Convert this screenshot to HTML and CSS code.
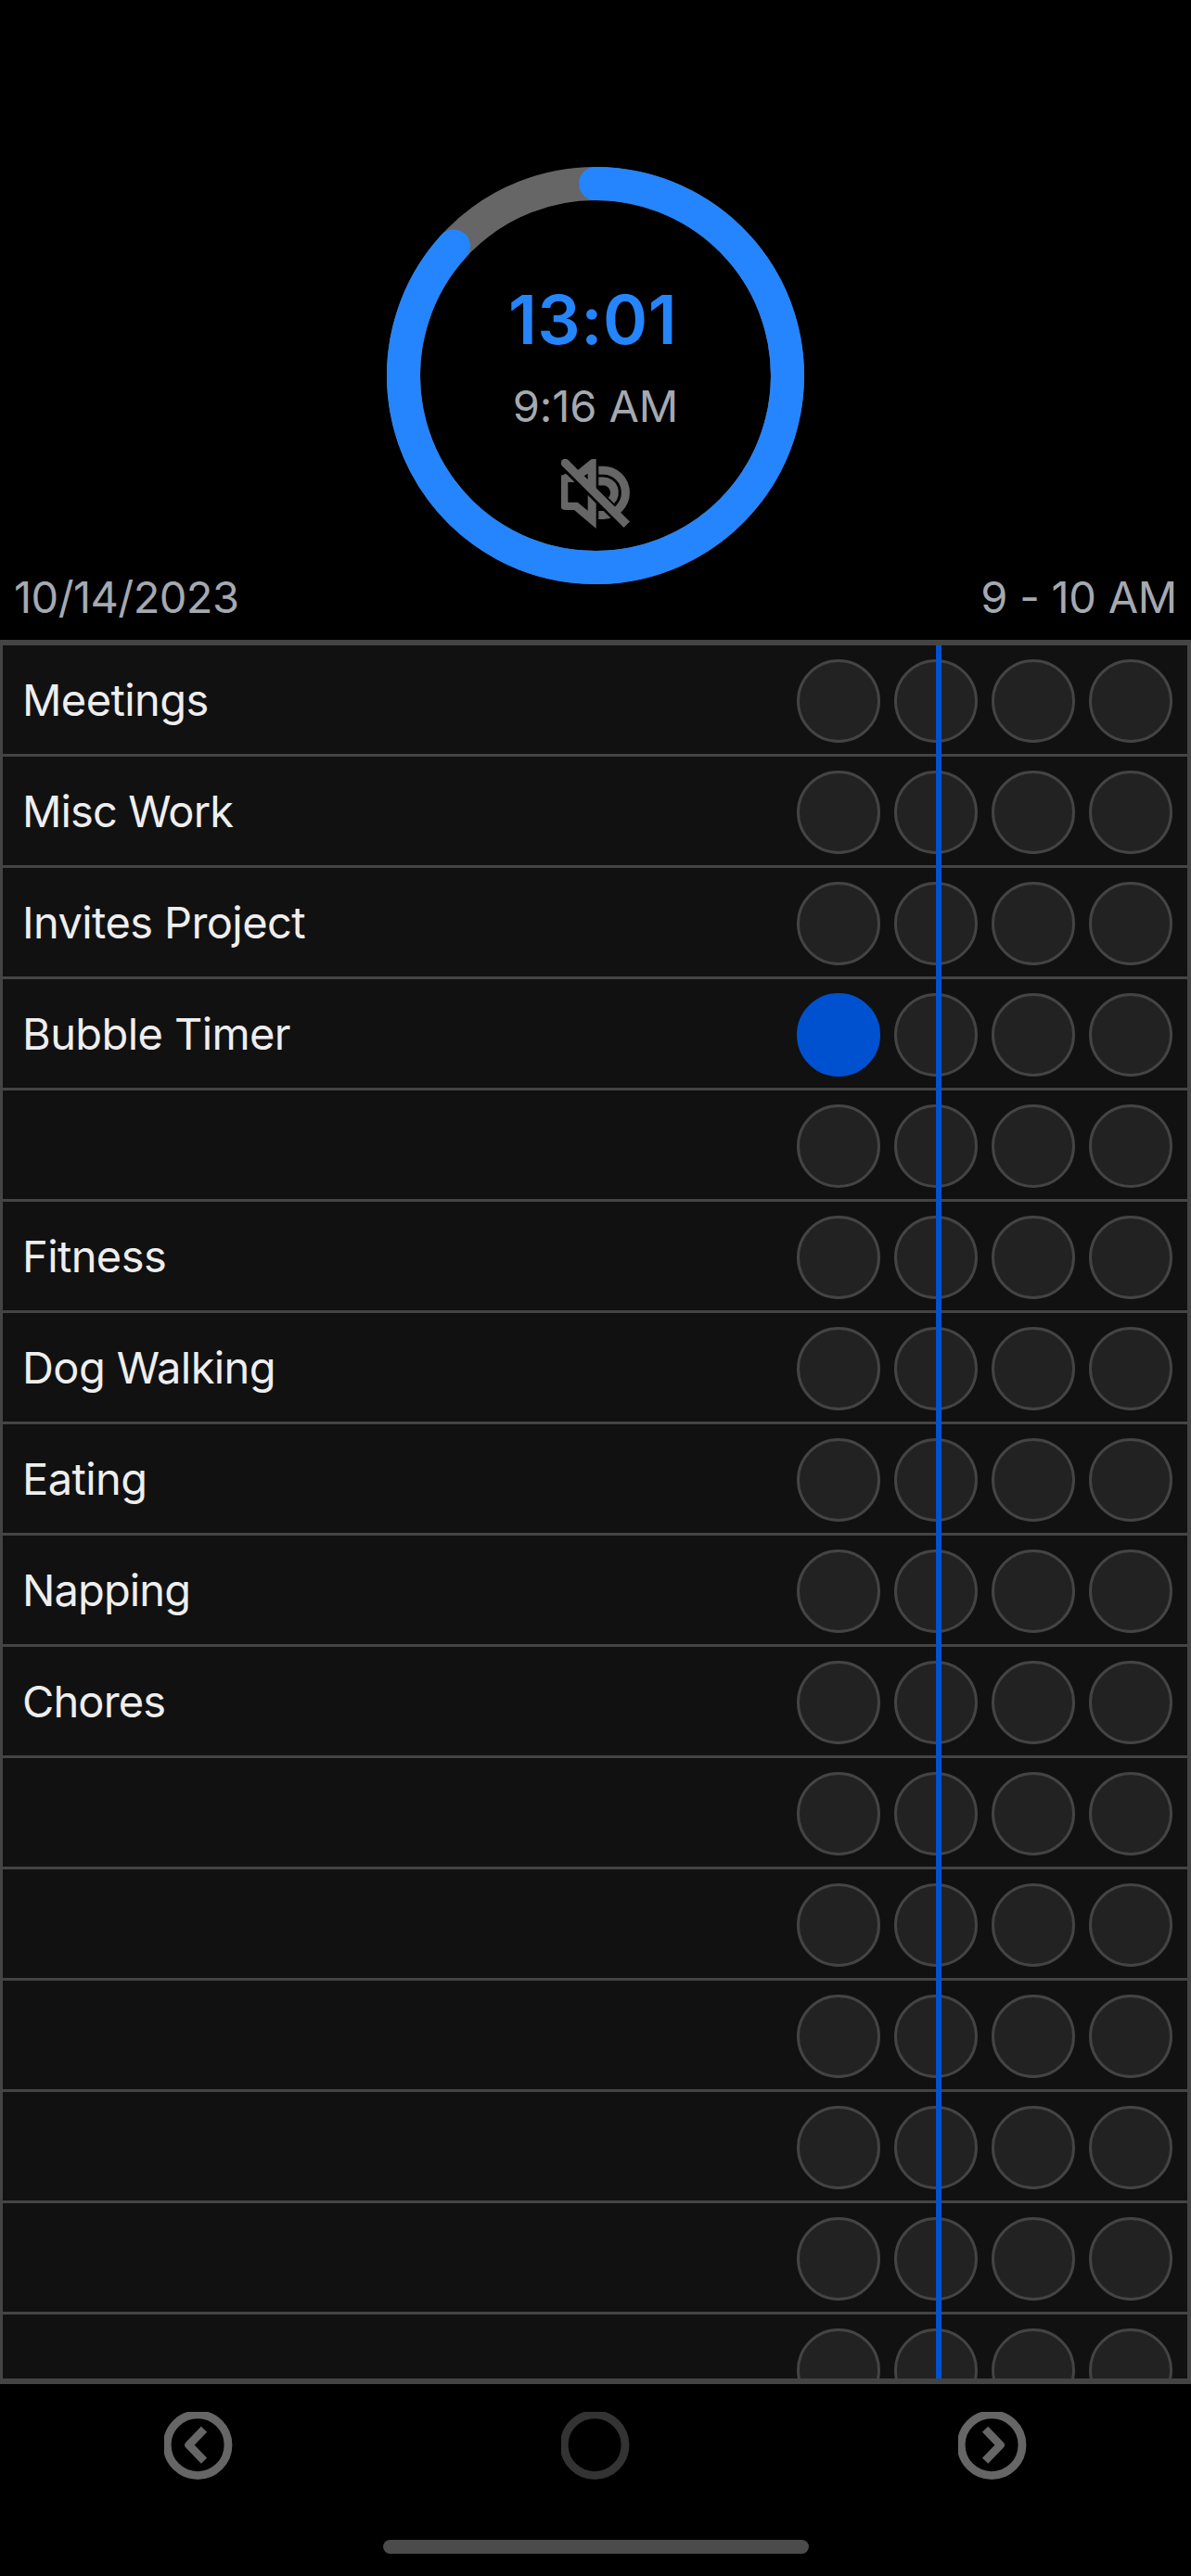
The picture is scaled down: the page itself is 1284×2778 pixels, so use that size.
FILE: index.html
```html
<!DOCTYPE html>
<html lang="en">
<head>
<meta charset="utf-8">
<title>Bubble Timer</title>
<link rel="stylesheet" href="styles.css">
</head>
<body>
<main class="app">
  <header class="header">
    <div class="dial">
      <svg class="ring" viewBox="0 0 450 450" aria-hidden="true">
        <circle class="ring-track" cx="225" cy="225" r="207"/>
        <path class="ring-value" d="M225 18A207 207 0 1 1 72.1 85.4"/>
      </svg>
      <div class="dial-content">
        <div class="countdown">13:01</div>
        <div class="clock">9:16 AM</div>
        <svg class="mute" viewBox="0 0 74 75" aria-label="Muted">
          <path class="mute-fill" d="M0 19Q.3 16.7 3.3 16.7L4.3 15.7 6.3 16.7 15 25.3 14.5 25H7.3V46.7H17.7L28.7 55.7V37.5L37.7 46.5V75L14 55H5Q0 55 0 52Z"/>
          <path class="mute-fill" fill-rule="evenodd" d="M17.7 12.3L32 .6Q33 0 34 0H37.7V36H30L17 14ZM28.7 15.7L24.3 18.5 28.7 22Z"/>
          <path class="mute-arc" d="M40.3 12.2H45.3A24.1 24.1 0 0 1 45.3 60.4H40.3"/>
          <path class="mute-arc" d="M40.3 24H45.3A12.2 12.2 0 0 1 53.9 44.8"/>
          <path class="mute-gap" d="M4.3 12.4L62.5 70.6"/>
          <path class="mute-slash" d="M4.3 4.3L70.8 70.8"/>
          <circle class="mute-fill" cx="4.3" cy="4.3" r="4.6"/>
        </svg>
      </div>
    </div>
    <div class="labels">
      <span class="date">10/14/2023</span>
      <span class="hours">9 - 10 AM</span>
    </div>
  </header>

  <section class="sheet">
    <div class="row"><span class="name">Meetings</span><i class="bubble"></i><i class="bubble"></i><i class="bubble"></i><i class="bubble"></i></div>
    <div class="row"><span class="name tight">Misc Work</span><i class="bubble"></i><i class="bubble"></i><i class="bubble"></i><i class="bubble"></i></div>
    <div class="row"><span class="name">Invites Project</span><i class="bubble"></i><i class="bubble"></i><i class="bubble"></i><i class="bubble"></i></div>
    <div class="row"><span class="name">Bubble Timer</span><i class="bubble filled"></i><i class="bubble"></i><i class="bubble"></i><i class="bubble"></i></div>
    <div class="row"><span class="name"></span><i class="bubble"></i><i class="bubble"></i><i class="bubble"></i><i class="bubble"></i></div>
    <div class="row"><span class="name">Fitness</span><i class="bubble"></i><i class="bubble"></i><i class="bubble"></i><i class="bubble"></i></div>
    <div class="row"><span class="name">Dog Walking</span><i class="bubble"></i><i class="bubble"></i><i class="bubble"></i><i class="bubble"></i></div>
    <div class="row"><span class="name">Eating</span><i class="bubble"></i><i class="bubble"></i><i class="bubble"></i><i class="bubble"></i></div>
    <div class="row"><span class="name tight">Napping</span><i class="bubble"></i><i class="bubble"></i><i class="bubble"></i><i class="bubble"></i></div>
    <div class="row"><span class="name tight">Chores</span><i class="bubble"></i><i class="bubble"></i><i class="bubble"></i><i class="bubble"></i></div>
    <div class="row"><span class="name"></span><i class="bubble"></i><i class="bubble"></i><i class="bubble"></i><i class="bubble"></i></div>
    <div class="row"><span class="name"></span><i class="bubble"></i><i class="bubble"></i><i class="bubble"></i><i class="bubble"></i></div>
    <div class="row"><span class="name"></span><i class="bubble"></i><i class="bubble"></i><i class="bubble"></i><i class="bubble"></i></div>
    <div class="row"><span class="name"></span><i class="bubble"></i><i class="bubble"></i><i class="bubble"></i><i class="bubble"></i></div>
    <div class="row"><span class="name"></span><i class="bubble"></i><i class="bubble"></i><i class="bubble"></i><i class="bubble"></i></div>
    <div class="row"><span class="name"></span><i class="bubble"></i><i class="bubble"></i><i class="bubble"></i><i class="bubble"></i></div>
    <div class="now-line"></div>
  </section>

  <footer class="footer">
    <nav class="nav">
      <svg class="nav-icon" viewBox="0 0 74 75" aria-label="Previous">
        <circle cx="36.1" cy="35.7" r="32.9"/>
        <path d="M43 18.7L26.6 35.7L43 52.7"/>
      </svg>
      <svg class="nav-icon dim" viewBox="0 0 74 75" aria-label="Current">
        <circle cx="36.1" cy="35.7" r="32.9"/>
      </svg>
      <svg class="nav-icon" viewBox="0 0 74 75" aria-label="Next">
        <circle cx="36.1" cy="35.7" r="32.9"/>
        <path d="M29.1 18.7L45.5 35.7L29.1 52.7"/>
      </svg>
    </nav>
    <div class="home-bar"></div>
  </footer>
</main>
</body>
</html>
```
FILE: styles.css
```css
* { box-sizing: border-box; }

body {
  margin: 0;
  background: #000;
  color: #eee;
  font-family: Inter, "Liberation Sans", sans-serif;
  font-size: 47px;
  line-height: 56px;
}

.app {
  display: flex;
  flex-direction: column;
  width: 1284px;
  height: 2778px;
  overflow: hidden;
}

svg { display: block; }

/* Header: timer dial with the date and hour range along the bottom */
.header {
  display: grid;
  flex: none;
  height: 690px;
  color: #a5a9b1;
}

.dial,
.labels { grid-area: 1 / 1; }

.dial {
  display: grid;
  justify-self: center;
  width: 450px;
  height: 450px;
  margin-top: 180px;
}

.ring,
.dial-content { grid-area: 1 / 1; }

.ring { width: 450px; height: 450px; }
.ring-track,
.ring-value { fill: none; stroke-width: 36; }
.ring-track { stroke: #666; }
.ring-value { stroke: #2585ff; stroke-linecap: round; }

.dial-content {
  display: flex;
  flex-direction: column;
  align-items: center;
  padding-top: 121px;
}

.countdown {
  margin-right: 6px;
  color: #2585ff;
  font-size: 73px;
  font-weight: 600;
  line-height: 88px;
  letter-spacing: 0.5px;
}

.clock {
  margin-top: 21px;
  letter-spacing: -0.1px;
}

.mute { width: 74px; height: 75px; margin-top: 29px; }
.mute-fill { fill: #666; }
.mute-arc { fill: none; stroke: #666; stroke-width: 9; }
.mute-gap { fill: none; stroke: #000; stroke-width: 2.9; }
.mute-slash { fill: none; stroke: #666; stroke-width: 9; }

.labels {
  display: flex;
  justify-content: space-between;
  align-items: flex-end;
  padding: 0 15px 18px;
}

.date { letter-spacing: -0.57px; }
.hours { letter-spacing: -0.27px; }

/* Sheet of activities */
.sheet {
  position: relative;
  flex: none;
  height: 1881px;
  overflow: hidden;
  background: #111;
  border: solid #444;
  border-width: 6px 4px 6px 3px;
}

.row {
  display: flex;
  gap: 15px;
  height: 120px;
  padding: 15px 16px 0 21px;
  border-bottom: 3px solid #444;
}

.name {
  flex: 1;
  padding-top: 16px;
  letter-spacing: -0.6px;
  white-space: nowrap;
}

.name.tight { letter-spacing: -0.88px; }

.bubble {
  flex: none;
  width: 90px;
  height: 90px;
  background: #222;
  border: 3px solid #444;
  border-radius: 50%;
}

.bubble.filled {
  background: #0051d0;
  border-color: #0051d0;
}

/* Current time marker drawn over the rows */
.now-line {
  position: absolute;
  top: 0;
  bottom: 0;
  left: 1006px;
  width: 6px;
  background: #0051d0;
}

/* Footer */
.footer {
  display: flex;
  flex: 1;
  flex-direction: column;
  align-items: center;
  justify-content: space-between;
  padding: 30px 0 24px;
}

.nav {
  display: grid;
  grid-template-columns: repeat(3, 1fr);
  justify-items: center;
  width: 100%;
}

.nav-icon {
  width: 74px;
  height: 75px;
  overflow: hidden;
  fill: none;
  stroke: #666;
  stroke-width: 8.8;
  stroke-linejoin: round;
}

.nav-icon.dim { stroke: #333; }

.home-bar {
  width: 459px;
  height: 15px;
  margin-left: 1px;
  background: #4b4b4b;
  border-radius: 8px;
}
```
